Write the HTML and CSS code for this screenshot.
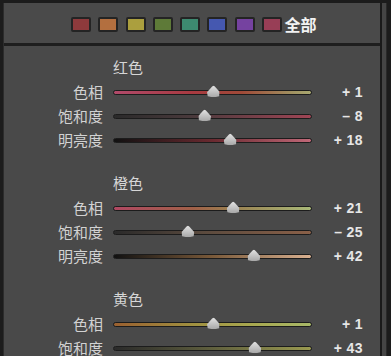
FILE: index.html
```html
<!DOCTYPE html>
<html lang="zh">
<head>
<meta charset="utf-8">
<link rel="stylesheet" href="styles.css">
</head>
<body>
<div class="screen">
  <div class="panel">
    <div class="header">
      <span class="sw c-red"></span>
      <span class="sw c-orange"></span>
      <span class="sw c-yellow"></span>
      <span class="sw c-green"></span>
      <span class="sw c-aqua"></span>
      <span class="sw c-blue"></span>
      <span class="sw c-purple"></span>
      <span class="sw c-magenta"></span>
      <span class="all">全部</span>
    </div>
    <div class="content">
      <div class="section">
        <div class="sec-label">红色</div>
        <div class="row"><span class="lbl">色相</span><div class="track red-hue"><span class="thumb" style="left:50.5%"></span></div><span class="val">+ 1</span></div>
        <div class="row"><span class="lbl">饱和度</span><div class="track red-sat"><span class="thumb" style="left:46%"></span></div><span class="val">– 8</span></div>
        <div class="row"><span class="lbl">明亮度</span><div class="track red-lum"><span class="thumb" style="left:59%"></span></div><span class="val">+ 18</span></div>
      </div>
      <div class="section">
        <div class="sec-label">橙色</div>
        <div class="row"><span class="lbl">色相</span><div class="track ora-hue"><span class="thumb" style="left:60.5%"></span></div><span class="val">+ 21</span></div>
        <div class="row"><span class="lbl">饱和度</span><div class="track ora-sat"><span class="thumb" style="left:37.5%"></span></div><span class="val">– 25</span></div>
        <div class="row"><span class="lbl">明亮度</span><div class="track ora-lum"><span class="thumb" style="left:71%"></span></div><span class="val">+ 42</span></div>
      </div>
      <div class="section">
        <div class="sec-label">黄色</div>
        <div class="row"><span class="lbl">色相</span><div class="track yel-hue"><span class="thumb" style="left:50.5%"></span></div><span class="val">+ 1</span></div>
        <div class="row"><span class="lbl">饱和度</span><div class="track yel-sat"><span class="thumb" style="left:71.5%"></span></div><span class="val">+ 43</span></div>
      </div>
    </div>
  </div>
  <div class="gutter"></div>
</div>
</body>
</html>
```
FILE: styles.css
```css
html, body {
  margin: 0;
  padding: 0;
}
body {
  background: #1c1c1c;
  width: 391px;
  height: 356px;
  overflow: hidden;
  font-family: "Noto Sans CJK SC", "Liberation Sans", sans-serif;
}
.screen {
  display: flex;
  padding: 3px 0 0 3px;
  height: 353px;
}
.panel {
  width: 379px;
  box-sizing: border-box;
  border-right: 2px solid #1a1a1a;
  border-left: 1px solid #2c2c2c;
  background: #494949;
  display: flex;
  flex-direction: column;
  overflow: hidden;
}
.gutter {
  width: 4px;
  background: #454545;
  border-right: 1px solid #2a2a2a;
}
.header {
  flex: none;
  height: 43px;
  box-sizing: border-box;
  border-bottom: 3px solid #1e1e1e;
  background: #4a4a4a;
  display: flex;
  align-items: flex-start;
  padding: 14px 0 0 67px;
  gap: 7.3px;
}
.sw {
  width: 20px;
  height: 15px;
  box-sizing: border-box;
  border: 2px solid #242424;
  border-radius: 2px;
  flex: none;
}
.c-red { background: #8e3a3c; }
.c-orange { background: #b36f3f; }
.c-yellow { background: #ab9f3e; }
.c-green { background: #5e7a38; }
.c-aqua { background: #3d8a70; }
.c-blue { background: #4558b0; }
.c-purple { background: #7542a0; }
.c-magenta { background: #983e56; }
.all {
  margin-left: -5px;
  margin-top: -3px;
  font-size: 16px;
  line-height: 20px;
  font-weight: 700;
  color: #f2f2f2;
}
.content {
  flex: none;
  padding: 11px 0 0 1px;
}
.section {
  margin-bottom: 21px;
}
.sec-label {
  padding-left: 108px;
  height: 20px;
  line-height: 20px;
  margin-bottom: 3px;
  font-size: 15px;
  color: #d6d6d6;
}
.row {
  display: flex;
  align-items: center;
  height: 24px;
}
.lbl {
  width: 98px;
  margin-right: 10px;
  text-align: right;
  font-size: 15px;
  line-height: 24px;
  color: #d2d2d2;
}
.track {
  position: relative;
  width: 199px;
  height: 5px;
  box-sizing: border-box;
  border: 1px solid #1c1c1c;
  border-radius: 3px;
}
.val {
  width: 51px;
  text-align: right;
  font-family: "Liberation Sans", sans-serif;
  font-weight: 700;
  font-size: 14px;
  color: #e6e6e6;
  letter-spacing: 0.4px;
}
.thumb {
  position: absolute;
  top: 50%;
  width: 13px;
  height: 12px;
  transform: translate(-50%, -55%);
  background: linear-gradient(180deg, #e4e4e4, #a6a6a6);
  clip-path: polygon(50% 0, 62% 12%, 100% 58%, 94% 90%, 50% 100%, 6% 90%, 0 58%, 38% 12%);
  filter: drop-shadow(0 1px 0 #222);
}
.red-hue { background: linear-gradient(90deg, #b04a6a, #a83a40 40%, #a04a38 65%, #a09060 90%, #a8a870); }
.red-sat { background: linear-gradient(90deg, #2a2a2a, #4a3a3c 40%, #a04555); }
.red-lum { background: linear-gradient(90deg, #111111, #6a2a30 50%, #c06878); }
.ora-hue { background: linear-gradient(90deg, #b04862, #a06048 40%, #9a8050 60%, #a8b878); }
.ora-sat { background: linear-gradient(90deg, #2a2a2a, #5a4a3e 45%, #8a6048); }
.ora-lum { background: linear-gradient(90deg, #111111, #7a5a3a 50%, #d8b090); }
.yel-hue { background: linear-gradient(90deg, #9a6030, #a09040 40%, #a8a850 70%, #a8b868); }
.yel-sat { background: linear-gradient(90deg, #2a2a2a, #5a5a3c 45%, #9a9a50); }
```
